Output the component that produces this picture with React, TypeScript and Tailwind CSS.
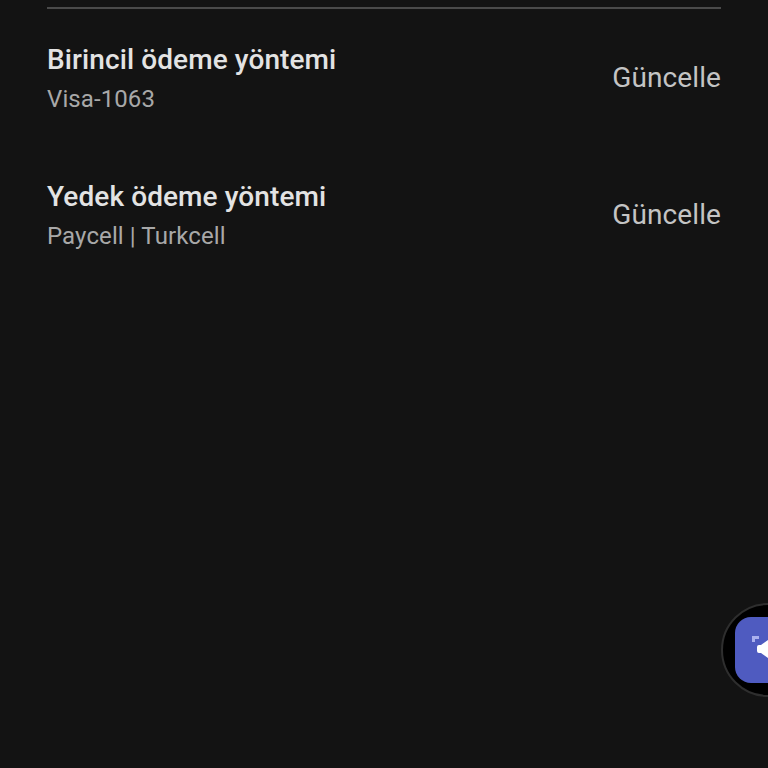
function PaymentRow({ title, detail }: { title: string; detail: string }) {
  return (
    <div className="flex items-center justify-between">
      <div className="flex flex-col">
        <span className="text-[28px] leading-[36px] font-medium tracking-[0.1px] text-[#e3e3e3]">{title}</span>
        <span className="mt-[5px] text-[24px] leading-[32px] tracking-[0.1px] text-[#a8a8a8]">{detail}</span>
      </div>
      <button className="mb-[2px] text-[28px] leading-[36px] tracking-[0.1px] text-[#c4c4c4]">Güncelle</button>
    </div>
  );
}

export default function App() {
  return (
    <div className="relative h-[768px] w-[768px] overflow-hidden bg-[#131313] font-['Roboto',sans-serif]">
      <div className="px-[47px] pt-[7px]">
        <div className="h-[2px] bg-[#4a4a4a]" />
        <div className="mt-[33px] flex flex-col gap-[64px]">
          <PaymentRow title="Birincil ödeme yöntemi" detail="Visa-1063" />
          <PaymentRow title="Yedek ödeme yöntemi" detail="Paycell | Turkcell" />
        </div>
      </div>

      <div className="absolute left-[721px] top-[603px] flex h-[94px] w-[94px] items-center justify-center rounded-full border-2 border-[#2e2e2e] bg-black">
        <div className="relative h-[66px] w-[66px] rounded-[16px] bg-[#4f5bc0]">
          <svg className="absolute left-0 top-0" width="66" height="66" viewBox="0 0 66 66">
            <path d="M17 25v-6h7v3h-4v3z" fill="#aab0ee" />
            <path d="M22 30q0-2 2-2h2l7-5v18l-7-5h-2q-2 0-2-2z" fill="#ffffff" />
          </svg>
        </div>
      </div>
    </div>
  );
}
